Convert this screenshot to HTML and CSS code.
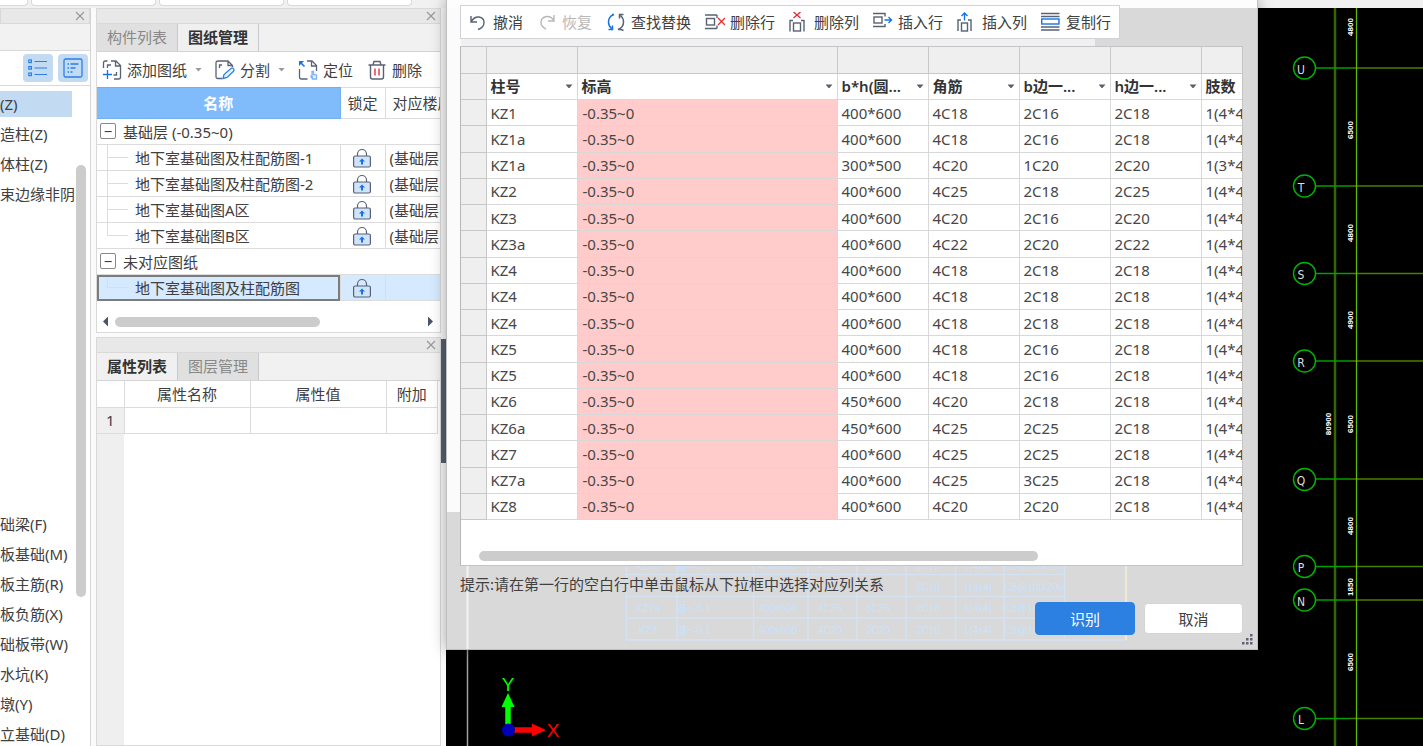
FILE: index.html
```
<!DOCTYPE html>
<html lang="zh-CN">
<head>
<meta charset="utf-8">
<title>识别柱表</title>
<link rel="stylesheet" href="styles.css">
</head>
<body>
<svg class="defs" aria-hidden="true">
  <symbol id="close" viewBox="0 0 10 10"><path d="M1 1l8 8M9 1L1 9" fill="none" stroke="#999" stroke-width="1.2"/></symbol>
  <symbol id="lock" viewBox="0 0 20 20"><path d="M5.500 8V6a4.500 4.500 0 0 1 9 0v2" fill="none" stroke="#596273" stroke-width="1.200"/><rect x="1.600" y="8" width="16.800" height="11" rx="1.500" fill="#cfe3fd" stroke="#596273" stroke-width="1.200"/><path d="M10 10.500l3 3H11V16.500H9v-3H7z" fill="#1473e6"/></symbol>
</svg>
<div class="app">
  <div class="ribbon"><span class="slab first"></span><span class="slab"></span><span class="slab"></span><span class="slab"></span></div>
  <div class="main">
    <nav class="nav">
      <div class="titlebar"><button class="close" aria-label="关闭"><svg width="10" height="10"><use href="#close"/></svg></button></div>
      <div class="nav-strip"></div>
      <div class="nav-modes">
        <button class="mode" aria-label="列表"><svg width="20" height="18" viewBox="0 0 20 18" fill="none" stroke="#2a80e8" stroke-width="1.200"><rect x=".8" y="1" width="2.600" height="2.600"/><rect x=".8" y="7.500" width="2.600" height="2.600"/><rect x=".8" y="14" width="2.600" height="2.600"/><path d="M6.500 2.500H19M6.500 9H19M6.500 15.500H19"/></svg></button>
        <button class="mode" aria-label="详情"><svg width="20" height="20" viewBox="0 0 20 20" fill="none" stroke="#2a80e8" stroke-width="1.300"><rect x="1" y="1" width="18" height="18" rx="1.500"/><path d="M4.500 6h1.500M7.500 6h8M4.500 10h1.500M7.500 10h5M4.500 14h1.500M7.500 14h2"/></svg></button>
      </div>
      <div class="nav-body">
        <div class="nav-list">
          <a class="item on" href="#">(Z)</a><a class="item" href="#">造柱(Z)</a><a class="item" href="#">体柱(Z)</a><a class="item" href="#">束边缘非阴</a>
          <div class="group"><a class="item" href="#">础梁(F)</a><a class="item" href="#">板基础(M)</a><a class="item" href="#">板主筋(R)</a><a class="item" href="#">板负筋(X)</a><a class="item" href="#">础板带(W)</a><a class="item" href="#">水坑(K)</a><a class="item" href="#">墩(Y)</a><a class="item" href="#">立基础(D)</a></div>
        </div>
        <div class="vbar"><div class="vthumb"></div></div>
      </div>
    </nav>

    <div class="docks">
      <section class="dock">
        <div class="titlebar"><button class="close" aria-label="关闭"><svg width="10" height="10"><use href="#close"/></svg></button></div>
        <div class="tabs"><button class="tab">构件列表</button><button class="tab on">图纸管理</button></div>
        <div class="tools">
          <button class="tool"><svg width="20" height="20" viewBox="0 0 20 20" fill="none" stroke="#596273" stroke-width="1.300"><path d="M1.500 8V3q0-2 2-2h2M9 1h5l4.500 4.500V17q0 2-2 2H12M13.500 1v5h5"/><path d="M5.500 8V5H9M14.500 12v3h-3"/><path d="M5.500 10v9M1 14.500h9" stroke="#1473e6"/></svg>添加图纸</button>
          <i class="caret"></i>
          <button class="tool"><svg width="20" height="20" viewBox="0 0 20 20" fill="none" stroke="#596273" stroke-width="1.300"><path d="M7 18.500H3q-2 0-2-2V3q0-2 2-2h10l4.500 4.500V7M13 1v4.500h4.500M4.500 8V5H7"/><path d="M8 18.500l1-4 7.500-6.500q1.500-.5 2.200 1t-.2 2.200L12 17.500z" stroke="#2a80e8" fill="#e8f2ff"/></svg>分割</button>
          <i class="caret"></i>
          <button class="tool"><svg width="20" height="20" viewBox="0 0 20 20" fill="none" stroke="#596273" stroke-width="1.300"><path d="M9 1h5l4.500 4.500V11M13.500 1v5h5M1.500 9v8q0 2 2 2h6"/><path d="M6.500 6.500L2 2" stroke="#1473e6" stroke-width="1.600"/><path d="M1 1h5L1 6z" fill="#1473e6" stroke="none"/><path d="M14 18.500l-1.500-3M14 15v-3.500h1.500v3l3 .5v4h-4z" stroke="#7db4f8" fill="#e4f0ff"/></svg>定位</button>
          <button class="tool gap"><svg width="20" height="20" viewBox="0 0 20 20" fill="none" stroke="#596273" stroke-width="1.400"><path d="M1.500 5h17M6 5l1-3.500h6L14 5M3.500 5v12q0 2 2 2h9q2 0 2-2V5"/><path d="M8 8.500v7M12 8.500v7" stroke="#e0323c"/></svg>删除</button>
        </div>
        <table class="drawings">
          <colgroup><col class="c-name"><col class="c-lock"><col></colgroup>
          <thead><tr><th class="blue">名称</th><th>锁定</th><th class="cut">对应楼层</th></tr></thead>
          <tbody>
            <tr class="grp"><td colspan="3"><button class="fold" aria-label="折叠">−</button>基础层 (-0.35~0)</td></tr>
            <tr><td class="leaf">地下室基础图及柱配筋图-1</td><td class="mid"><svg width="20" height="20"><use href="#lock"/></svg></td><td>(基础层</td></tr>
            <tr><td class="leaf">地下室基础图及柱配筋图-2</td><td class="mid"><svg width="20" height="20"><use href="#lock"/></svg></td><td>(基础层</td></tr>
            <tr><td class="leaf">地下室基础图A区</td><td class="mid"><svg width="20" height="20"><use href="#lock"/></svg></td><td>(基础层</td></tr>
            <tr><td class="leaf last">地下室基础图B区</td><td class="mid"><svg width="20" height="20"><use href="#lock"/></svg></td><td>(基础层</td></tr>
            <tr class="grp"><td colspan="3"><button class="fold" aria-label="折叠">−</button>未对应图纸</td></tr>
            <tr class="sel"><td class="leaf last">地下室基础图及柱配筋图</td><td class="mid"><svg width="20" height="20"><use href="#lock"/></svg></td><td></td></tr>
          </tbody>
        </table>
        <div class="hbar"><i class="left"></i><div class="htrack"><div class="hthumb"></div></div><i class="right"></i></div>
      </section>
      <section class="dock props">
        <div class="titlebar"><button class="close" aria-label="关闭"><svg width="10" height="10"><use href="#close"/></svg></button></div>
        <div class="tabs"><button class="tab on">属性列表</button><button class="tab">图层管理</button></div>
        <table class="proptable">
          <colgroup><col class="p-num"><col class="p-name"><col class="p-val"><col></colgroup>
          <tr><th class="corner"></th><th>属性名称</th><th>属性值</th><th>附加</th></tr>
          <tr><td class="num">1</td><td></td><td></td><td></td></tr>
        </table>
        <div class="prop-rest"></div>
      </section>
    </div>
    <div class="splitter"><div class="grip"></div></div>

    <main class="canvas">
      <svg class="cad" width="100%" height="100%">
        <g transform="translate(-446 -8)">
          <path d="M467.500 640V2000" stroke="#a0a0a0" stroke-width="1.500" fill="none"/>
          <path d="M1335 0V2000" stroke="#366600" stroke-width="2.500"/>
          <path d="M1316 68h34M1316 186h34M1316 273.500h34M1316 361h34M1316 479h34M1316 566.500h34M1316 600h34M1316 718.500h34" stroke="#00a000" stroke-width="1.500"/>
          <path d="M1350 68h2000M1350 186h2000M1350 273.500h2000M1350 361h2000M1350 479h2000M1350 566.500h2000M1350 600h2000M1350 718.500h2000" stroke="#487c00" stroke-width="1.500"/>
          <path d="M1356.500 0V2000" stroke="#63b800" stroke-width="1.300"/>
          <g fill="none" stroke="#00b400" stroke-width="1.400"><circle cx="1304.500" cy="68" r="11"/><circle cx="1304.500" cy="186" r="11"/><circle cx="1304.500" cy="273.500" r="11"/><circle cx="1304.500" cy="361" r="11"/><circle cx="1304.500" cy="479.500" r="11"/><circle cx="1304.500" cy="566.500" r="11"/><circle cx="1304.500" cy="600" r="11"/><circle cx="1304.500" cy="718.500" r="11"/></g>
          <g class="axis"><text x="1301" y="74">U</text><text x="1301" y="192">T</text><text x="1301" y="279">S</text><text x="1301" y="367">R</text><text x="1301" y="485">Q</text><text x="1301" y="572">P</text><text x="1301" y="606">N</text><text x="1301" y="724">L</text></g>
          <g class="dim">
            <text transform="translate(1353 27) rotate(-90)">4800</text><text transform="translate(1353 130) rotate(-90)">6500</text><text transform="translate(1353 233) rotate(-90)">4800</text><text transform="translate(1353 320) rotate(-90)">4900</text><text transform="translate(1353 424) rotate(-90)">6500</text><text transform="translate(1331 424) rotate(-90)">80900</text><text transform="translate(1353 526) rotate(-90)">4800</text><text transform="translate(1353 587) rotate(-90)">1850</text><text transform="translate(1353 662) rotate(-90)">6500</text>
          </g>
          <path d="M508 726v-22" stroke="#0f0" stroke-width="5.500"/><path d="M508 693l6.500 14h-13z" fill="#0f0"/>
          <path d="M512 730h22" stroke="#f00" stroke-width="5.500"/><path d="M546 730l-14 6.500v-13z" fill="#f00"/>
          <circle cx="508.500" cy="730" r="6.500" fill="#0000b8"/>
          <text class="ucs" x="508" y="691" fill="#0f0">Y</text><text class="ucs" x="553" y="737" fill="#f00">X</text>
        </g>
      </svg>
    </main>
  </div>
</div>

<div class="dialog" role="dialog" aria-label="识别柱表">
  <svg class="ghost" width="811" height="84" viewBox="447 566 811 84">
    <path d="M467.500 566v84" stroke="#f2f2f2" stroke-width="2"/>
    <path d="M626 575.500H1065M626 597.500H1065M626 619H1065M626 641H1126M626.500 566v75M677 566v75M753.500 566v75M808 566v75M857 566v75M906 566v75M955.500 566v75M1004 566v75M1064.500 566v75" fill="none" stroke="#d3e2f2" stroke-width="1.500"/>
    <path d="M1126 566v75" stroke="#efebd3" stroke-width="2"/>
    <g class="faint">
      <text x="648" y="571">KZ6a</text><text x="694" y="571">基~-0.1</text><text x="778" y="571">450x600</text><text x="830" y="571">4C25</text><text x="878" y="571">2C25</text><text x="928" y="571">2C18</text><text x="978" y="571">1(4x4)</text><text x="1034" y="571">C8@100/200</text>
      <text x="928" y="592">2C18</text><text x="978" y="592">1(4x4)</text><text x="1034" y="592">C8@100/200</text>
      <text x="648" y="613">KZ7a</text><text x="694" y="613">基~-0.1</text><text x="778" y="613">400x600</text><text x="830" y="613">4C25</text><text x="878" y="613">3C25</text><text x="928" y="613">2C18</text><text x="978" y="613">1(4x4)</text><text x="1034" y="613">C8@100/200</text>
      <text x="648" y="635">KZ8</text><text x="694" y="635">基~-0.1</text><text x="778" y="635">400x600</text><text x="830" y="635">4C20</text><text x="878" y="635">2C20</text><text x="928" y="635">2C18</text><text x="978" y="635">1(4x4)</text><text x="1034" y="635">C8@100/200</text>
    </g>
  </svg>
  <div class="bar">
    <button class="tool"><svg width="20" height="20" viewBox="0 0 20 20" fill="none" stroke="#596273" stroke-width="1.400"><path d="M3 4v6h6M3 10q3-5.500 8-5 5 .8 5 5.500 0 5-6 7"/></svg>撤消</button>
    <button class="tool off" disabled><svg width="20" height="20" viewBox="0 0 20 20" fill="none" stroke="#b8b8b8" stroke-width="1.400"><path d="M17 3v6h-6M17 9q-2.500-5-7.500-4.500-5.500 1-5.500 6 0 4 5 6.500"/></svg>恢复</button>
    <button class="tool"><svg width="20" height="20" viewBox="0 0 20 20" fill="none" stroke-width="1.500"><path d="M8 2.500Q2.500 4.500 2.500 10q0 4 3 6.500M2.500 17.500h4v-4M8 2.500H6" stroke="#1473e6"/><path d="M12 17.500q5.500-2 5.500-7.500 0-4-3-6.500M17.500 2.500h-4v4M12 17.500h3l2.500 1" stroke="#596273"/></svg>查找替换</button>
    <button class="tool"><svg width="20" height="20" viewBox="0 0 20 20" fill="none" stroke="#596273" stroke-width="1.400"><path d="M0 3h12M0 16.500h12M12 3v3M12 13.500v3"/><rect x="1.500" y="6.500" width="8" height="6.500"/><path d="M13 6l7 7M20 6l-7 7" stroke="#e0323c"/></svg>删除行</button>
    <button class="tool"><svg width="20" height="20" viewBox="0 0 20 20" fill="none" stroke="#596273" stroke-width="1.400"><path d="M1 19.500V8.500h3M15 19.500V8.500h-3"/><rect x="4.500" y="11" width="7" height="8"/><path d="M4.500 0l7 6M11.500 0l-7 6" stroke="#e0323c"/></svg>删除列</button>
    <button class="tool"><svg width="20" height="20" viewBox="0 0 20 20" fill="none" stroke="#596273" stroke-width="1.400"><path d="M0 1.500h12v3M0 14.500h12v-2.500"/><rect x="1" y="5" width="8" height="6"/><path d="M11.500 8h7M15.500 5l3 3-3 3" stroke="#1473e6"/></svg>插入行</button>
    <button class="tool"><svg width="20" height="20" viewBox="0 0 20 20" fill="none" stroke="#596273" stroke-width="1.400"><path d="M1 19V8h3M14 19V8h-3"/><rect x="4.500" y="11" width="6" height="8"/><path d="M7.500 8.500V1M4.500 4l3-3 3 3" stroke="#1473e6"/></svg>插入列</button>
    <button class="tool"><svg width="20" height="20" viewBox="0 0 20 20" fill="none" stroke="#596273" stroke-width="1.400"><path d="M0 1.500h18.500M0 4.500h18.500M0 15h18.500M0 18h18.500"/><rect x=".7" y="7" width="17.300" height="5" stroke="#1473e6"/></svg>复制行</button>
  </div>
  <div class="sheet">
    <table class="grid">
      <colgroup><col class="g-head"><col class="g-col"><col class="g-wide"><col class="g-col"><col class="g-col"><col class="g-col"><col class="g-col"><col class="g-col"></colgroup>
      <tr class="blank"><td></td><td></td><td></td><td></td><td></td><td></td><td></td><td></td></tr>
      <tr><th></th><th><div>柱号<i class="caret"></i></div></th><th><div>标高<i class="caret"></i></div></th><th><div>b*h(圆...<i class="caret"></i></div></th><th><div>角筋<i class="caret"></i></div></th><th><div>b边一...<i class="caret"></i></div></th><th><div>h边一...<i class="caret"></i></div></th><th><div>肢数</div></th></tr>
      <tr><td></td><td>KZ1</td><td>-0.35~0</td><td>400*600</td><td>4C18</td><td>2C16</td><td>2C18</td><td>1(4*4)</td></tr>
      <tr><td></td><td>KZ1a</td><td>-0.35~0</td><td>400*600</td><td>4C18</td><td>2C16</td><td>2C18</td><td>1(4*4)</td></tr>
      <tr><td></td><td>KZ1a</td><td>-0.35~0</td><td>300*500</td><td>4C20</td><td>1C20</td><td>2C20</td><td>1(3*4)</td></tr>
      <tr><td></td><td>KZ2</td><td>-0.35~0</td><td>400*600</td><td>4C25</td><td>2C18</td><td>2C25</td><td>1(4*4)</td></tr>
      <tr><td></td><td>KZ3</td><td>-0.35~0</td><td>400*600</td><td>4C20</td><td>2C16</td><td>2C20</td><td>1(4*4)</td></tr>
      <tr><td></td><td>KZ3a</td><td>-0.35~0</td><td>400*600</td><td>4C22</td><td>2C20</td><td>2C22</td><td>1(4*4)</td></tr>
      <tr><td></td><td>KZ4</td><td>-0.35~0</td><td>400*600</td><td>4C18</td><td>2C18</td><td>2C18</td><td>1(4*4)</td></tr>
      <tr><td></td><td>KZ4</td><td>-0.35~0</td><td>400*600</td><td>4C18</td><td>2C18</td><td>2C18</td><td>1(4*4)</td></tr>
      <tr><td></td><td>KZ4</td><td>-0.35~0</td><td>400*600</td><td>4C18</td><td>2C18</td><td>2C18</td><td>1(4*4)</td></tr>
      <tr><td></td><td>KZ5</td><td>-0.35~0</td><td>400*600</td><td>4C18</td><td>2C16</td><td>2C18</td><td>1(4*4)</td></tr>
      <tr><td></td><td>KZ5</td><td>-0.35~0</td><td>400*600</td><td>4C18</td><td>2C16</td><td>2C18</td><td>1(4*4)</td></tr>
      <tr><td></td><td>KZ6</td><td>-0.35~0</td><td>450*600</td><td>4C20</td><td>2C18</td><td>2C18</td><td>1(4*4)</td></tr>
      <tr><td></td><td>KZ6a</td><td>-0.35~0</td><td>450*600</td><td>4C25</td><td>2C25</td><td>2C18</td><td>1(4*4)</td></tr>
      <tr><td></td><td>KZ7</td><td>-0.35~0</td><td>400*600</td><td>4C25</td><td>2C25</td><td>2C18</td><td>1(4*4)</td></tr>
      <tr><td></td><td>KZ7a</td><td>-0.35~0</td><td>400*600</td><td>4C25</td><td>3C25</td><td>2C18</td><td>1(4*4)</td></tr>
      <tr><td></td><td>KZ8</td><td>-0.35~0</td><td>400*600</td><td>4C20</td><td>2C20</td><td>2C18</td><td>1(4*4)</td></tr>
    </table>
    <div class="sheet-bar"><div class="sheet-thumb"></div></div>
  </div>
  <p class="hint">提示:请在第一行的空白行中单击鼠标从下拉框中选择对应列关系</p>
  <div class="actions"><button class="btn primary">识别</button><button class="btn">取消</button></div>
  <svg class="resize" width="12" height="12" viewBox="0 0 12 12" fill="#5c6470"><path d="M8 0h2.500v2.500H8zM8 4h2.500v2.500H8zM8 8h2.500v2.500H8zM4 4h2.500v2.500H4zM4 8h2.500v2.500H4zM0 8h2.500v2.500H0z"/></svg>
</div>
</body>
</html>
```
FILE: styles.css
```
* { box-sizing: border-box; }
body {
  margin: 0;
  height: 100vh;
  overflow: hidden;
  position: relative;
  background: #f1f1f1;
  color: #404040;
  font: 15px/20px "Noto Sans", "Noto Sans CJK SC", sans-serif;
}
button { margin: 0; padding: 0; border: 0; background: none; font: inherit; color: inherit; }
a { color: inherit; text-decoration: none; }
table { border-collapse: collapse; table-layout: fixed; width: 100%; }
th, td { padding: 0; font-weight: 400; white-space: nowrap; overflow: hidden; text-align: left; }
.defs { position: absolute; width: 0; height: 0; }
.app { height: 100%; display: flex; flex-direction: column; }

.ribbon { height: 8px; flex: none; display: flex; gap: 3px; overflow: hidden; }
.slab { width: 125px; height: 6px; background: #fff; border: 1px solid #d9d9d9; border-top: 0; border-radius: 0 0 4px 4px; }
.slab.first { width: 28px; border-left: 0; border-bottom-left-radius: 0; }
.main { flex: 1; min-height: 0; display: flex; }

.titlebar { height: 16px; flex: none; background: #e8e8e8; border: 1px solid #d9d9d9; display: flex; justify-content: flex-end; align-items: center; padding-right: 4px; }
.close { display: flex; }

.nav { width: 91px; flex: none; background: #fff; border-right: 1px solid #d4d4d4; display: flex; flex-direction: column; }
.nav-strip { height: 27px; flex: none; background: #f2f2f2; border-bottom: 1px solid #d9d9d9; }
.nav-modes { height: 35px; flex: none; display: flex; justify-content: flex-end; align-items: center; gap: 5px; padding-right: 2px; border-bottom: 1px solid #d9d9d9; }
.mode { width: 30px; height: 28px; border-radius: 4px; background: #c3daf3; display: flex; align-items: center; justify-content: center; }
.nav-body { flex: 1; min-height: 0; display: flex; overflow: hidden; }
.nav-list { width: 75px; padding-top: 3px; }
.item { display: block; height: 30px; line-height: 30px; white-space: nowrap; overflow: hidden; }
.item.on { height: 26px; line-height: 26px; margin: 2px 3px 2px 0; background: #c3daf3; }
.group { margin-top: 300px; }
.vbar { flex: 1; padding: 79px 4px 0 1px; }
.vthumb { height: 432px; border-radius: 5px; background: #ccc; }

.docks { width: 350px; flex: none; padding-left: 5px; background: #fafafa; display: flex; flex-direction: column; gap: 4px; }
.dock { background: #fff; border: 1px solid #d9d9d9; border-top: 0; }
.dock .titlebar { border-width: 1px 0; }
.tabs { height: 28px; flex: none; background: #f1f1f1; display: flex; border-bottom: 1px solid #d4d4d4; }
.tab { width: 81px; background: #e0e0e0; border-right: 1px solid #c6c9cd; color: #888; line-height: 27px; }
.tab.on { background: #f0f0f0; color: #333; font-weight: 600; }
.tools { height: 35px; display: flex; align-items: center; padding-left: 5px; overflow: hidden; }
.tool { display: flex; align-items: center; gap: 5px; white-space: nowrap; flex: none; }
.tool svg { flex: none; }
.tool.gap { margin-left: 14px; }
.caret { display: block; flex: none; width: 7px; height: 4px; background: #777; clip-path: polygon(0 0, 100% 0, 50% 100%); }
.tools .caret { margin: 0 13px 0 8px; background: #999; }
.drawings { height: 214px; }
.c-name { width: 243px; }
.c-lock { width: 45px; }
.drawings th { height: 31px; text-align: center; border: 1px solid #dcdcdc; border-left-width: 0; }
.drawings th.blue { background: #80bbfb; color: #fff; font-weight: 600; border-color: #74aff0; }
.drawings th.cut { text-align: left; padding-left: 7px; border-right: 0; }
.drawings td { border: 1px solid #dcdcdc; border-width: 1px 1px 1px 0; padding-left: 4px; line-height: 20px; }
.drawings td:last-child { border-right: 0; }
.drawings td.mid { padding: 0 2px 0 0; text-align: center; }
.mid svg { display: block; margin: 0 auto; }
.drawings .leaf { padding-left: 38px; background: linear-gradient(#ddd, #ddd) 10px 12px / 21px 1px no-repeat, linear-gradient(#ddd, #ddd) 10px 0 / 1px 100% no-repeat; }
.drawings .leaf.last { background-size: 21px 1px, 1px 12px; }
.drawings .sel td { background-color: #d5e9ff; }
.drawings .sel .leaf { outline: 2px solid #7c7c7c; outline-offset: -2px; }
.fold { width: 16px; height: 16px; border: 1px solid #888; border-radius: 2px; background: #fff; line-height: 13px; margin: 0 7px 0 -1px; vertical-align: 1px; }
.hbar { height: 31px; padding: 10px 7px 0 6px; display: flex; align-items: center; gap: 7px; }
.hbar i { width: 5px; height: 10px; background: #4a5568; }
.left { clip-path: polygon(100% 0, 100% 100%, 0 50%); }
.right { clip-path: polygon(0 0, 100% 50%, 0 100%); }
.htrack { flex: 1; }
.hthumb { width: 67%; height: 10px; border-radius: 5px; background: #ccc; }
.props { flex: 1; min-height: 0; display: flex; flex-direction: column; }
.proptable { width: calc(100% - 2px); height: 52px; flex: none; }
.p-num { width: 27px; }
.p-name { width: 126px; }
.p-val { width: 136px; }
.proptable th, .proptable td { height: 26px; text-align: center; border: 1px solid #dcdcdc; border-left: 0; border-top: 0; }
.proptable .num { background: #efefef; }
.prop-rest { flex: 1; width: 27px; background: #efefef; }

.splitter { width: 5px; flex: none; background: #fafafa; padding-top: 331px; }
.grip { height: 124px; background: #56606e; }
.canvas { flex: 1; min-width: 0; background: #000; overflow: hidden; }
.cad { display: block; }
.axis { fill: #ddd; text-anchor: middle; font: 12px "DejaVu Sans Condensed", "Liberation Sans", sans-serif; }
.dim { fill: #fff; text-anchor: middle; font: bold 8px "Liberation Sans Narrow", "Liberation Sans", sans-serif; }
.ucs { text-anchor: middle; font: 19px "Liberation Sans Narrow", "Liberation Sans", sans-serif; }

.dialog {
  position: absolute;
  left: 446px;
  top: 0;
  width: 812px;
  padding: 5px 14px 14px 13px;
  border: 1px solid #bfbfbf;
  border-top: 0;
  background: linear-gradient(#fdfdfd, #fdfdfd) 0 0 / 100% 8px no-repeat,
    linear-gradient(#fbfbfb, #fbfbfb) 0 0 / 14px 512px no-repeat,
    linear-gradient(#f0f0f0, #f0f0f0) 0 0 / 648px 47px no-repeat,
    #d9d9d9;
  box-shadow: 0 0 14px rgba(0, 0, 0, .35);
}
.ghost { position: absolute; left: 0; bottom: 0; }
.faint { fill: #cbe2fb; text-anchor: middle; font: 10px "Liberation Sans Narrow", "Liberation Sans", "Noto Sans CJK SC", sans-serif; }
.bar { width: max-content; height: 34px; display: flex; align-items: center; gap: 14px; padding: 0 8px 0 7px; background: #fff; border: 1px solid #cfd3d8; }
.off { color: #b8b8b8; }
.sheet { position: relative; margin-top: 7px; background: #fff; border: 1px solid #c4c4c4; border-left-color: #b8b8b8; overflow: hidden; }
.grid { width: 831px; height: 473px; color: #474747; }
.g-head { width: 25px; }
.g-col { width: 91px; }
.g-wide { width: 260px; }
.grid td, .grid th { height: 26px; padding: 0 4px; border: 1px solid #d8d8d8; border-top: 0; border-left: 0; }
.grid th { font-weight: 600; color: #333; }
.grid th div { display: flex; justify-content: space-between; align-items: center; }
.grid th .caret { background: #56606e; }
.grid tr > :first-child, .grid .blank td { background: #efefef; border-color: #c8c8c8; }
.grid td:nth-child(3) { background: #ffcbcb; padding-left: 5px; }
.grid .blank td:nth-child(3) { background: #efefef; }
.sheet-bar { padding: 31px 18px 4px; }
.sheet-thumb { width: 75%; height: 10px; border-radius: 5px; background: #ccc; }
.hint { position: relative; margin: 8px 0 8px; line-height: 20px; }
.actions { position: relative; display: flex; justify-content: flex-end; align-items: center; gap: 9px; }
.btn { width: 99px; height: 31px; background: #fff; border: 1px solid #d4d4d4; border-radius: 4px; }
.btn.primary { width: 100px; height: 33px; background: #2b80e2; border-color: #2b80e2; color: #fff; }
.resize { position: absolute; right: 3px; bottom: 3px; }
```
